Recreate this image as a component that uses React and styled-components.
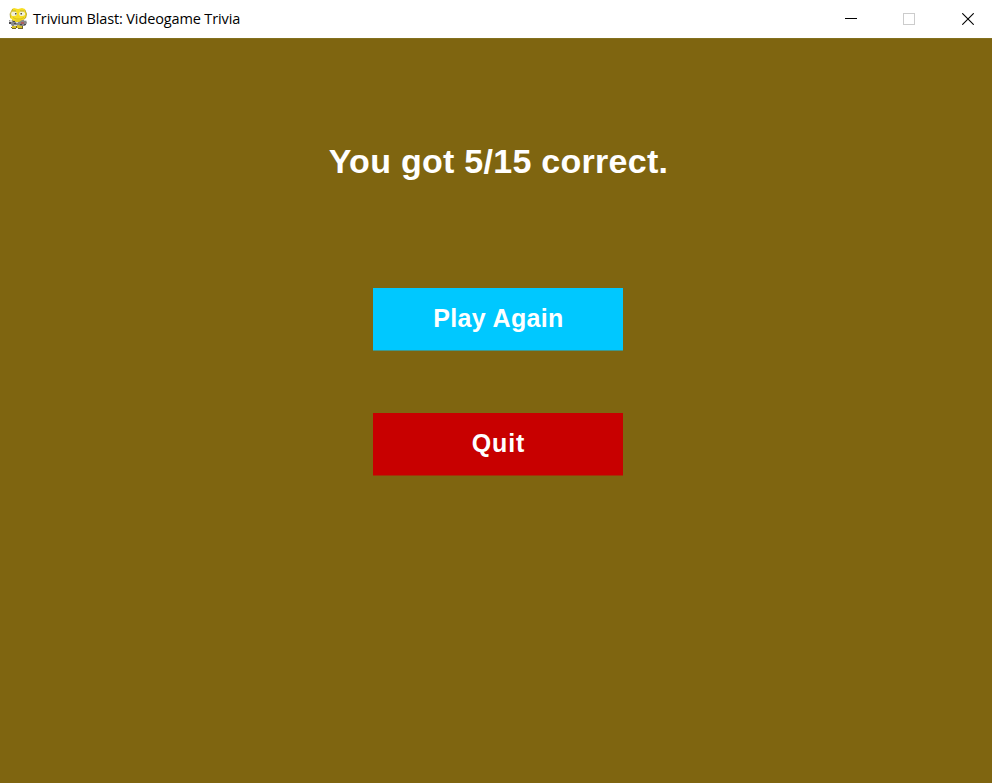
import React from "react";
import styled, { createGlobalStyle } from "styled-components";

const GlobalStyle = createGlobalStyle`
  * { box-sizing: border-box; }
  body { margin: 0; background: #7f6510; }
`;

const Window = styled.div`
  display: flex;
  flex-direction: column;
  height: 783px;
  width: 992px;
  overflow: hidden;
`;

const TitleBar = styled.header`
  display: flex;
  align-items: center;
  height: 38px;
  padding: 0 18px 0 8px;
  background: #fff;
`;

const Title = styled.span`
  flex: 1;
  margin-left: 5px;
  font: 14.5px/20px "Open Sans", "Noto Sans", sans-serif;
  letter-spacing: -0.13px;
  color: #000;
  white-space: nowrap;
`;

const Controls = styled.div`
  display: flex;
  gap: 46px;
  height: 38px;
`;

const ControlButton = styled.button`
  display: flex;
  align-items: center;
  justify-content: center;
  width: 12px;
  height: 38px;
  padding: 0;
  border: 0;
  background: none;
  color: ${(p) => (p.disabled ? "#ccc" : "#000")};

  &:last-child {
    margin-left: 1px;
  }
`;

const Screen = styled.main`
  flex: 1;
  display: flex;
  flex-direction: column;
  align-items: center;
  padding: 102px 0 0 4px;
  border-top: 1px solid #83701f;
  background: #7f6510;
  font-family: "Liberation Sans", Arial, sans-serif;
  color: #fff;
`;

const Result = styled.h1`
  margin: 0;
  padding-left: 1px;
  font-size: 34px;
  line-height: 40px;
  font-weight: 700;
  letter-spacing: 0.28px;
  white-space: nowrap;
`;

const Menu = styled.div`
  display: flex;
  flex-direction: column;
  gap: 62px;
  margin-top: 107px;
`;

const MenuButton = styled.button`
  width: 250px;
  height: 63px;
  padding: 0 0 3px 1px;
  border: 0;
  border-bottom: 1px solid ${(p) => p.$edge};
  background: ${(p) => p.$fill};
  color: #fff;
  font: 700 25px/30px "Liberation Sans", Arial, sans-serif;
  letter-spacing: ${(p) => p.$spacing};
`;

const SnakeIcon = () => (
  <svg width="20" height="22" viewBox="0 0 20 22">
    <path d="M4 11h10v9H4z" fill="#e6cf25" />
    <path d="M4 1 6 0l4 1 4-1 3 1 1 3 1 2-1 4-3 2H5L2 10V6l1-2z" fill="#f7dd22" />
    <path d="M2.500 9.500 2 6l1.500-3L5 1M17 2l1.500 4-1 4-2 1.500" fill="none" stroke="#9a8d38" strokeWidth=".6" />
    <path d="M4 3.500h3.500L9 5v2L7 8H4L3 6zM12 3.500h3.500L17 5v2l-2 1h-3l-1-2z" fill="#f2f0d5" />
    <path d="M7 5h1.500v1.500H7zM12.500 5H14v1.500h-1.500z" fill="#55523d" />
    <path d="M4 3h4M12 3h4" stroke="#a89c35" strokeWidth=".7" />
    <path d="M5 9.500 8 11h5l3-1.500" fill="none" stroke="#c9af1b" strokeWidth=".7" />
    <path d="M1 12h3l3 2h4l3-2h4l1 3-2 3h-4l-3-1-2 1H4l-2-3z" fill="#898989" />
    <path d="M2 12h2v2H2zM8 14h2v1H8zM6 17h3v1H6zM16 12h2v1h-2z" fill="#d8d8d6" />
    <path d="M1 14h2v2H1zM5 13h2v1H5zM6 15h2v1H6zM12 16h2v1h-2zM16 16h2v1h-2z" fill="#4b4b51" />
    <path d="M13 14h3v2h-3z" fill="#a95c60" />
    <path d="M4 18h10v2H4z" fill="#d8c126" />
    <path d="M3 19h1v1H3zM4 20h4v1H4zM10 20h5v1h-5zM14 18h1v2h-1zM8 18h1v2H8z" fill="#70642a" />
  </svg>
);

export default function App() {
  return (
    <Window>
      <GlobalStyle />
      <TitleBar>
        <SnakeIcon />
        <Title>Trivium Blast: Videogame Trivia</Title>
        <Controls>
          <ControlButton aria-label="Minimize">
            <svg width="12" height="12" shapeRendering="crispEdges"><path d="M0 5h12v1H0z" fill="currentColor" /></svg>
          </ControlButton>
          <ControlButton aria-label="Maximize" disabled>
            <svg width="12" height="12" shapeRendering="crispEdges"><path d="M.5.5h11v11H.5z" fill="none" stroke="currentColor" /></svg>
          </ControlButton>
          <ControlButton aria-label="Close">
            <svg width="12" height="12"><path d="M.3.300 11.700 11.700M11.700.300.3 11.700" stroke="currentColor" strokeWidth="1.100" /></svg>
          </ControlButton>
        </Controls>
      </TitleBar>
      <Screen>
        <Result>You got 5/15 correct.</Result>
        <Menu>
          <MenuButton $fill="#00c8ff" $edge="#3f978a" $spacing="0.35px">Play Again</MenuButton>
          <MenuButton $fill="#c80000" $edge="#a43208" $spacing="0.9px">Quit</MenuButton>
        </Menu>
      </Screen>
    </Window>
  );
}
